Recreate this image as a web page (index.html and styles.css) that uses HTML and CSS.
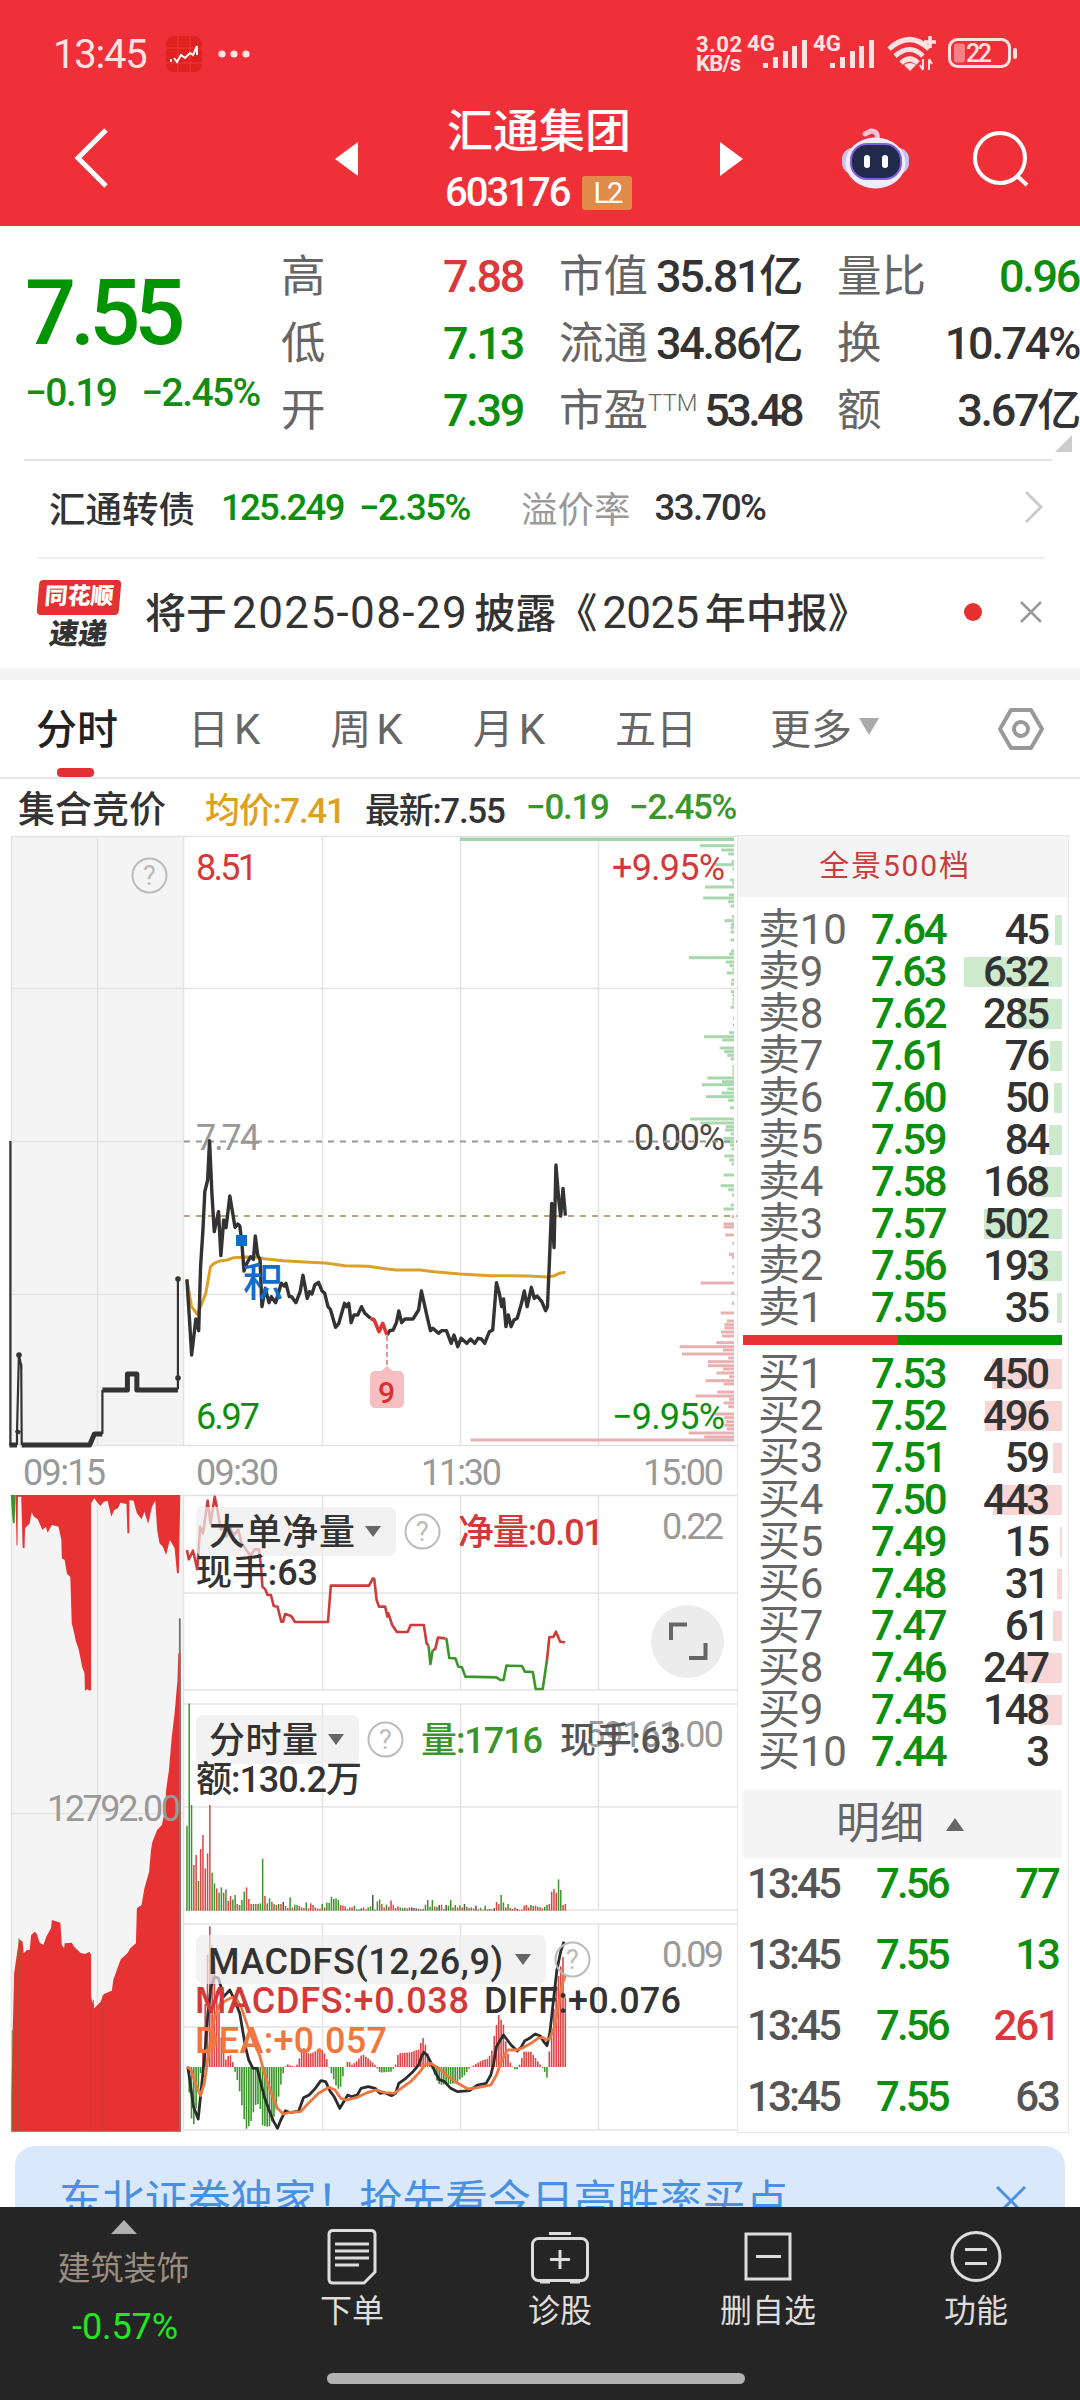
FILE: index.html
```html
<!DOCTYPE html>
<html lang="zh-CN">
<head>
    <meta charset="UTF-8">
    <meta name="viewport" content="width=device-width, initial-scale=1.0">
    <title>汇通集团 603176</title>
    <link rel="stylesheet" href="styles.css">
</head>
<body>
    <header class="top">
        <div class="status">
            <span class="clock">13:45</span>
            <svg class="app" width="36" height="36" viewBox="0 0 36 36">
                <rect width="36" height="36" rx="8" fill="#e0211f"/>
                <path d="M12 0V36M24 0V36M0 12H36M0 27H36" stroke="#ee3a35" stroke-width="1"/>
                <path d="M5 23v3M8 22l3 4 4-7 4 3 5-5 3 2 4-9v9" fill="none" stroke="#fff" stroke-width="2"/>
            </svg>
            <svg class="dots" width="32" height="10" viewBox="0 0 32 10" fill="#ffe3e3"><circle cx="4" cy="5" r="3.6"/><circle cx="16" cy="5" r="3.6"/><circle cx="28" cy="5" r="3.6"/></svg>
            <div class="speed"><span>3.02</span><span>KB/s</span></div>
            <svg class="signals" width="325" height="60" viewBox="745 25 325 60" fill="#ffe3e3">
                <g class="net-type">
                    <text x="748" y="52" textLength="28" lengthAdjust="spacingAndGlyphs">4G</text>
                    <text x="814" y="52" textLength="28" lengthAdjust="spacingAndGlyphs">4G</text>
                </g>
                <path d="M764 64h5v5h-5zM774 58h5v11h-5zM784 52h5v17h-5zM793 47h5v22h-5zM803 41h5v28h-5z"/>
                <path d="M831 64h5v5h-5zM841 58h5v11h-5zM851 52h5v17h-5zM860 47h5v22h-5zM870 41h5v28h-5z"/>
                <g fill="none" stroke="#ffe3e3" stroke-width="5">
                    <path d="M890 50q21-19 40 0M896 57q15-13 28 0M902 64q9-8 17 0"/>
                </g>
                <path d="M905 66l6 6 6-6q-6-4-12 0z"/>
                <path d="M931 37v12M925 43h12" stroke="#ffe3e3" stroke-width="3.5"/>
                <path d="M924 60v10m-3-4l3 5M930 71v-10m3 4l-3-5" fill="none" stroke="#ffe3e3" stroke-width="2"/>
                <rect x="950.5" y="40.500" width="60" height="27" rx="8" fill="none" stroke="#ffe3e3" stroke-width="3"/>
                <rect x="955" y="44.500" width="11" height="19" rx="3" fill="#f98085"/>
                <rect x="1014" y="49" width="4" height="11" rx="2"/>
                <text class="battery" x="967" y="63" textLength="26">22</text>
            </svg>
        </div>
        <nav class="titlebar">
            <svg class="back" width="40" height="64" viewBox="0 0 40 64" fill="none" stroke="#fff" stroke-width="5"><path d="M35 4L7 32l28 28"/></svg>
            <svg class="prev" width="24" height="36" viewBox="0 0 24 36" fill="#fff"><path d="M23 1v34L0 18z"/></svg>
            <div class="stock">
                <h1>汇通集团</h1>
                <div class="code"><span>603176</span><b>L2</b></div>
            </div>
            <svg class="next" width="24" height="36" viewBox="0 0 24 36" fill="#fff"><path d="M0 1v34l23-17z"/></svg>
            <svg class="robot" width="70" height="66" viewBox="840 125 70 66">
                <path d="M876 141q2-10-6-10l-6 3" fill="none" stroke="#f6c3d6" stroke-width="5" stroke-linecap="round"/>
                <rect x="841" y="148" width="67" height="26" rx="11" fill="#c9c2ee"/>
                <ellipse cx="874.500" cy="163" rx="30" ry="25.500" fill="#f1ecfd"/>
                <rect x="850" y="144" width="50" height="35" rx="16" fill="#222a4c" stroke="#7e62d6" stroke-width="2"/>
                <rect x="863" y="155" width="6" height="13" rx="3" fill="#fff"/>
                <rect x="881" y="155" width="6" height="13" rx="3" fill="#fff"/>
            </svg>
            <svg class="search" width="60" height="60" viewBox="970 129 60 60" fill="none" stroke="#fff" stroke-width="4"><circle cx="1000" cy="158" r="25"/><path d="M1016 175l11 10"/></svg>
        </nav>
    </header>

    <section class="quote">
        <div class="price">
            <div class="last">7.55</div>
            <div class="chg"><span>−0.19</span><span>−2.45%</span></div>
        </div>
        <div class="stats">
            <div><label>高</label><span class="red">7.88</span></div>
            <div><label>市值</label><span>35.81<i>亿</i></span></div>
            <div><label>量比</label><span class="green">0.96</span></div>
            <div><label>低</label><span class="green">7.13</span></div>
            <div><label>流通</label><span>34.86<i>亿</i></span></div>
            <div><label>换</label><span>10.74%</span></div>
            <div><label>开</label><span class="green">7.39</span></div>
            <div><label>市盈<sup>TTM</sup></label><span class="pe">53.48</span></div>
            <div><label>额</label><span>3.67<i>亿</i></span></div>
        </div>
        <span class="corner"></span>
    </section>

    <section class="bond">
        <span class="name">汇通转债</span>
        <span class="num green p">125.249</span>
        <span class="num green c">−2.35%</span>
        <span class="lab">溢价率</span>
        <span class="num r">33.70%</span>
        <svg width="20" height="34" viewBox="0 0 20 34" fill="none" stroke="#ccc" stroke-width="3"><path d="M2 2l15 15L2 32"/></svg>
    </section>

    <section class="news">
        <div class="logo"><b>同花顺</b><em>速递</em></div>
        <p>将于<span class="date">2025-08-29</span>披露《<span>2025</span>年中报》</p>
        <i class="dot"></i>
        <svg width="22" height="22" viewBox="0 0 22 22" stroke="#999" stroke-width="2.500"><path d="M1 1l20 20M21 1L1 21"/></svg>
    </section>

    <nav class="tabs">
        <span class="on">分时</span>
        <span>日<u>K</u></span>
        <span>周<u>K</u></span>
        <span>月<u>K</u></span>
        <span>五日</span>
        <span class="more">更多</span>
        <svg width="46" height="44" viewBox="0 0 46 44" fill="none" stroke="#999" stroke-width="4"><path d="M13 3h20l11 19-11 19H13L2 22z" stroke-linejoin="round"/><circle cx="23" cy="22" r="7"/></svg>
    </nav>

    <div class="legend">
        <span class="auction">集合竞价</span>
        <span class="avg">均价:7.41</span>
        <span class="new">最新:7.55</span>
        <span class="lime">−0.19</span>
        <span class="lime">−2.45%</span>
    </div>

    <main>
        <svg class="chart" width="737" height="1300" viewBox="0 835 737 1300">
            <!-- backgrounds and grid -->
            <rect x="11" y="836" width="172" height="610" fill="#f4f4f4"/>
            <rect x="11" y="1495" width="172" height="636" fill="#f4f4f4"/>
            <g class="grid">
                <path d="M11 836.500H737M11 988.500H737M11 1141.500H183M11 1294.500H737M11 1445.500H737"/>
                <path d="M11.500 836V1446M97.500 836V1446M183.500 836V1446M322.500 836V1446M460.500 836V1446M598.500 836V1446"/>
                <path d="M11.500 1495V2131M97.500 1495V2131M183.500 1495V2131M11 1813.500H183"/>
                <path d="M184 1495.500H737M184 1593H737M184 1690H737M184 1704H737M184 1807H737M184 1910H737M184 1924H737M184 2027H737M184 2130H737"/>
                <path d="M322.500 1495V1690M460.500 1495V1690M598.500 1495V1690M322.500 1704V1910M460.500 1704V1910M598.500 1704V1910M322.500 1924V2130M460.500 1924V2130M598.500 1924V2130"/>
            </g>
            <g id="depth"></g>

            <!-- price -->
            <g class="axis">
                <text x="196" y="880" textLength="62" fill="#d23a3a">8.51</text>
                <text x="612" y="880" textLength="113" fill="#d23a3a">+9.95%</text>
                <text x="196" y="1150" textLength="64" fill="#999">7.74</text>
                <text x="634" y="1150" textLength="91" fill="#484848">0.00%</text>
                <text x="196" y="1429" textLength="64" fill="#0c8f0c">6.97</text>
                <text x="612" y="1429" textLength="113" fill="#0c8f0c">−9.95%</text>
            </g>
            <path d="M184 1141.500H737" stroke="#999" stroke-width="2" stroke-dasharray="6 6"/>
            <path d="M184 1216H737" stroke="#b3a678" stroke-width="2" stroke-dasharray="6 6"/>
            <g class="line" transform="translate(0 1120) scale(.471939 .333333)">
                <path d="M22 63V975M36 975V940L40 705L45 738L46 975M217 942V810M377 808V477" stroke="#333" stroke-width="2.200"/>
                <path d="M20 975H36M36 940L40 930M43 738H47M46 975H190L200 942H217M217 810H270V762H290V810H377" stroke="#333" stroke-width="5"/>
                <path stroke="#dba02a" stroke-width="3" d="M396 478L406 560 418 583 425 560 436 520 441 480 446 440 454 430 465 423 482 420 495 413 520 411 545 412 560 416 600 422 655 427 690 429 730 437 780 439 820 447 840 450 890 450 920 455 975 462 1040 467 1120 468 1160 471 1175 467 1185 460 1198 457"/>
                <path stroke="#333" stroke-width="3.400" d="M396 478L402 610 406 705 415 597 421 632 425 440 430 330 434 215 440 180 444 62 449 220 454 335 463 275 468 407 474 300 479 323 487 228 498 322 504 312 508 318 512 360 517 453 523 430 531 410 537 418 541 348 546 405 551 420 555 560 562 505 570 548 575 530 584 548 596 490 602 498 606 490 613 530 618 530 627 548 636 515 642 466 651 535 656 515 661 522 667 495 675 487 682 512 688 520 695 560 700 568 711 622 718 610 730 550 734 560 739 550 744 608 750 585 758 585 766 560 773 580 785 595M820 645L826 632 833 630 840 608 845 573 851 608 858 597 875 597 887 570 893 513 898 545 905 590 912 632 917 625 929 640 936 632 946 632 956 670 962 645 970 680 977 655 989 670 997 657 1006 670 1013 655 1020 657 1027 670 1037 635 1044 630 1048 560 1052 488 1058 520 1063 560 1067 537 1072 620 1077 585 1083 620 1089 600 1096 595 1105 550 1111 513 1117 560 1126 502 1132 535 1138 528 1148 545 1156 572 1160 560 1164 430 1169 250 1174 383 1178 135 1184 240 1188 288 1193 205 1198 287"/>
                <path stroke="#e03535" stroke-width="3.600" d="M785 595L793 600 803 635 811 610 820 645"/>
            </g>
            <g fill="#333"><circle cx="19" cy="1355" r="2.800"/><circle cx="178" cy="1279" r="2.800"/><circle cx="178" cy="1378" r="2.800"/></g>
            <rect x="236" y="1235" width="11" height="11" fill="#0f6ecb"/>
            <text x="243" y="1296" class="ji">积</text>
            <path d="M387 1336V1368" stroke="#dc7373" stroke-width="1.500" stroke-dasharray="5 3"/>
            <path d="M387 1366l7 6h-14z" fill="#f6c0c2"/>
            <rect x="370" y="1371" width="34" height="37" rx="5" fill="#f6c0c2"/>
            <text x="378" y="1403" class="nine">9</text>
            <g class="axis" fill="#999">
                <text x="23" y="1485" textLength="83">09:15</text>
                <text x="196" y="1485" textLength="83">09:30</text>
                <text x="421" y="1485" textLength="81">11:30</text>
                <text x="643" y="1485" textLength="81">15:00</text>
            </g>

            <!-- call auction, lower half -->
            <g transform="translate(0 1480) scale(.471939 .333333)">
                <path fill="#3a962a" d="M23 45H33L31 130 27 128 24 75z"/>
                <path fill="#e63232" d="M33 45L35 195 37 198 38 50H45L48 203 52 205 53 145 63 130 67 97 72 110 80 118 90 150 97 140 101 158 110 135 124 140 130 180 131 235 137 240 142 282 149 290 152 430 157 458 160 480 167 510 174 560 179 580 180 632 185 628 190 632 193 630V70L200 55 205 65 213 78 220 65 228 62 236 110 242 90 250 85 255 68 268 72 270 160H274L274 60 283 62 290 100 300 118 306 95 314 132 322 80 329 62 333 150 338 190 345 200 352 225 360 180 370 205 375 280H379L382 45z"/>
            </g>
            <g transform="translate(0 1800) scale(.471939 .333333)">
                <path fill="#e63232" d="M24 995V890L27 690 30 520 37 450 41 418 48 425 50 460 57 450 63 450 66 405 74 395 78 402 84 428 92 435 98 410 108 385 110 360 128 368 131 435 136 445 137 430 152 428 157 440 170 458 180 462 190 455 193 465V590L200 625 213 605 220 582 237 572 240 540 250 500 256 478 270 460 276 445 288 430 290 325 300 315 306 265 316 215 320 150 323 125 333 90 343 75 350 30 352 -30 358 -90 364 -190 370 -260 376 -360 378 -440H383V995z"/>
                <path class="thin" d="M26 995V690M40 995V415M198 995V600" stroke="#6f7a1c"/>
                <path class="thin" d="M218 995V585" stroke="#b94a28"/>
                <path d="M381 995V-545" stroke="#777" stroke-width="4"/>
            </g>
            <text class="axis" x="47" y="1821" textLength="134" fill="#999">12792.00</text>

            <!-- net big orders -->
            <g class="line" transform="translate(0 1480) scale(.471939 .333333)" stroke-width="2.600">
                <path stroke="#cf3b3b" d="M396 210L400 238 409 212 418 268 424 140 430 160 440 62 446 130 455 50 462 100 468 150 475 140 480 170 486 140 495 165 505 150 512 190 520 205 530 228 540 208 549 208 553 260 556 320 562 328 567 345 574 345 580 378 588 380 596 425 600 425 604 402 617 408 625 426 695 426 701 317 782 317 790 295 793 297 798 360 803 380 816 380 821 410 823 400 831 435 841 456 864 456 870 435 898 435 904 490 908 497M917 510L922 508 928 473 944 475M1159 540L1164 472 1173 470 1178 455 1187 485 1197 487"/>
                <path stroke="#3a962a" d="M908 497L912 552 917 510M944 475L946 477 952 534 965 535 971 560 979 562 986 590 1052 592 1060 600 1067 600 1073 557 1106 558 1112 575 1129 576 1135 627 1150 627 1159 540"/>
            </g>

            <g id="volume"></g>
            <g id="macd"></g>
            <g class="line" transform="translate(0 1800) scale(.471939 .333333)" stroke-width="2.800">
                <path stroke="#2c2c2c" d="M398 801L404 860 410 920 420 957 427 860 434 760 440 650 447 560 455 530 463 535 468 560 474 590 487 570 497 600 508 640 514 690 520 740 527 780 536 805 545 805 553 850 560 890 570 930 580 965 588 985 595 960 605 932 615 938 633 933 643 893 655 885 668 865 680 842 690 845 700 875 708 890 720 925 737 885 745 890 757 885 765 865 780 860 795 865 805 880 815 878 830 887 838 880 845 850 860 835 875 815 887 795 893 770 898 757 905 765 912 785 920 810 930 838 942 845 955 865 970 875 995 872 1012 855 1030 850 1040 825 1046 790 1052 740 1060 720 1067 705 1075 720 1083 735 1096 753 1105 740 1112 722 1122 715 1134 702 1145 708 1152 725 1159 737 1165 700 1172 610 1180 510 1188 455 1195 425"/>
                <path stroke="#ee7740" d="M396 800L405 810 414 850 425 887 433 850 440 780 448 700 455 650 465 615 478 602 492 592 502 600 512 625 525 680 540 735 550 765 560 820 575 880 588 925 600 942 615 937 637 935 650 915 675 880 697 862 710 870 722 895 735 900 757 892 780 877 797 870 815 878 835 880 850 865 870 845 890 815 900 795 913 790 930 805 950 830 970 850 992 867 1015 862 1040 855 1052 825 1062 785 1075 750 1095 750 1110 742 1125 730 1140 715 1150 712 1158 720 1165 715 1175 680 1183 620 1190 560 1198 525"/>
            </g>

            <!-- indicator labels -->
            <g fill="#ececec" fill-opacity=".7">
                <rect x="196" y="1507" width="200" height="49" rx="7"/>
                <rect x="196" y="1715" width="163" height="49" rx="7"/>
                <rect x="196" y="1935" width="350" height="49" rx="7"/>
            </g>
            <path fill="#666" d="M365 1526h16l-8 11zM328 1734h16l-8 11zM515 1954h16l-8 11z"/>
            <g class="ask">
                <circle cx="149.500" cy="875.500" r="17"/><text x="149.500" y="885">?</text>
                <circle cx="422.500" cy="1531.500" r="17"/><text x="422.500" y="1541">?</text>
                <circle cx="385.500" cy="1739.500" r="17"/><text x="385.500" y="1749">?</text>
                <circle cx="572.500" cy="1959.500" r="17"/><text x="572.500" y="1969">?</text>
            </g>
            <g class="axis" fill="#999">
                <text x="662" y="1539" textLength="62">0.22</text>
                <text x="585" y="1747" textLength="139">59161.00</text>
                <text x="662" y="1967" textLength="62">0.09</text>
            </g>
            <g class="ind">
                <text x="209" y="1545" textLength="146">大单净量</text>
                <text x="458" y="1545" textLength="146" fill="#d23a3a">净量:0.01</text>
                <text x="196" y="1585" textLength="122">现手:63</text>
                <text x="209" y="1753" textLength="109">分时量</text>
                <text x="421" y="1753" textLength="122" fill="#3a962a">量:1716</text>
                <text x="560" y="1753" textLength="121" fill="#555">现手:63</text>
                <text x="196" y="1792" textLength="166">额:130.2万</text>
                <text x="208" y="1974" textLength="295">MACDFS(12,26,9)</text>
                <text x="195" y="2013" textLength="274" fill="#d23a3a">MACDFS:+0.038</text>
                <text x="484" y="2013" textLength="197">DIFF:+0.076</text>
                <text x="195" y="2053" textLength="192" fill="#f07840">DEA:+0.057</text>
            </g>
            <circle cx="687.500" cy="1641.500" r="36.500" fill="#ececec"/>
            <path d="M671 1640V1624.500H687M689 1658H705.500V1643" fill="none" stroke="#666" stroke-width="4"/>
        </svg>

        <aside class="book">
            <div class="full">全景500档</div>
            <div class="levels" id="asks"></div>
            <div class="ratio"><i></i></div>
            <div class="levels buy" id="bids"></div>
            <div class="detail">明细<i></i></div>
            <div class="trade"><span>13:45</span><b>7.56</b><em class="green">77</em></div>
            <div class="trade"><span>13:45</span><b>7.55</b><em class="green">13</em></div>
            <div class="trade"><span>13:45</span><b>7.56</b><em class="red">261</em></div>
            <div class="trade"><span>13:45</span><b>7.55</b><em>63</em></div>
        </aside>
    </main>

    <div class="banner">
        <span>东北证券独家！抢先看今日高胜率买点</span>
        <svg width="30" height="30" viewBox="0 0 30 30" stroke="#4a90e2" stroke-width="3"><path d="M1 1l28 28M29 1L1 29"/></svg>
    </div>

    <footer>
        <div class="items">
            <div class="sector"><i></i><span>建筑装饰</span><b>-0.57%</b></div>
            <div class="item doc">
                <svg width="60" height="56" viewBox="0 0 60 56"><path d="M11 1.500h38q4 0 4 4V43L42 54H11q-4 0-4-4V5.500q0-4 4-4z"/><path d="M13 15h34M13 22h34M13 29h34M13 36h24"/></svg>
                <span>下单</span>
            </div>
            <div class="item">
                <svg width="60" height="56" viewBox="0 0 60 56"><rect x="2.500" y="9.500" width="55" height="42" rx="6"/><path d="M19 4.500h22M30 21v19M20 30.500h20M10 53h10M40 53h10"/></svg>
                <span>诊股</span>
            </div>
            <div class="item">
                <svg width="60" height="56" viewBox="0 0 60 56"><rect x="8" y="5" width="44" height="45"/><path d="M18 27.500h25"/></svg>
                <span>删自选</span>
            </div>
            <div class="item">
                <svg width="60" height="56" viewBox="0 0 60 56"><circle cx="30" cy="27.500" r="24"/><path d="M19 20.500h22M19 34.500h22"/></svg>
                <span>功能</span>
            </div>
        </div>
        <div class="home"></div>
    </footer>
    <script src="chart.js"></script>
</body>
</html>
```
FILE: styles.css
```css
* {
    box-sizing: border-box;
}
body {
    margin: 0;
    width: 1080px;
    height: 2400px;
    overflow: hidden;
    position: relative;
    background: #fff;
    color: #333;
    font-family: Roboto, "Noto Sans CJK SC", sans-serif;
    font-weight: 500;
}
i, em {
    font-style: normal;
}
svg {
    display: block;
    flex: none;
}
.red {
    color: #d9393b;
}
.green {
    color: #0c8f0c;
}

/* header */
.top {
    height: 226px;
    background: #f03038;
    color: #fff;
}
.status {
    height: 108px;
    padding-left: 53px;
    display: flex;
    align-items: center;
    color: #ffe3e3;
}
.clock {
    width: 113px;
    font-size: 40px;
    font-weight: 400;
    letter-spacing: -1.2px;
}
.dots {
    margin-left: 16px;
}
.speed {
    margin-left: 446px;
    width: 48px;
    font-size: 22px;
    line-height: 19.5px;
    font-weight: 700;
}
.speed span {
    display: block;
    letter-spacing: 0.6px;
}
.speed span + span {
    letter-spacing: -0.8px;
}
.net-type {
    font-size: 22px;
    font-weight: 700;
}
.battery {
    font-size: 25px;
}
.titlebar {
    height: 118px;
    display: flex;
    align-items: center;
}
.back {
    margin: -18px 0 0 71px;
}
.prev {
    margin: -16px 0 0 224px;
}
.stock {
    width: 186px;
    margin: -16px 87px 0 88px;
    white-space: nowrap;
}
h1 {
    margin: 0;
    font-size: 46px;
    line-height: 58px;
    font-weight: 500;
}
.code {
    margin: 10px 0 0 -2px;
    display: flex;
    align-items: center;
    gap: 13px;
    font-size: 40px;
    line-height: 46px;
    letter-spacing: -2px;
}
.code b {
    width: 50px;
    height: 34px;
    border-radius: 3px;
    background: #e08b4a;
    font-size: 29px;
    line-height: 35px;
    font-weight: 400;
    text-align: center;
}
.next {
    margin-top: -16px;
}
.robot {
    margin: -18px 59px 0 97px;
}
.search {
    margin-top: -16px;
}

/* quote */
.quote {
    height: 235px;
    display: flex;
    position: relative;
}
.quote:after {
    content: "";
    position: absolute;
    left: 24px;
    right: 28px;
    bottom: 0;
    height: 2px;
    background: #e2e2e2;
}
.price {
    width: 281px;
    padding: 38px 0 0 25px;
    color: #009400;
}
.last {
    font-size: 90px;
    line-height: 100px;
    letter-spacing: -6px;
}
.chg {
    margin-top: 5px;
    display: flex;
    gap: 25px;
    font-size: 39px;
    line-height: 48px;
    letter-spacing: -1.6px;
    white-space: nowrap;
    color: #128c12;
}
.stats {
    display: grid;
    grid-template-columns: repeat(3, 242px);
    column-gap: 36px;
    grid-auto-rows: 67px;
    padding-top: 17px;
}
.stats div {
    display: flex;
    justify-content: space-between;
    align-items: center;
    white-space: nowrap;
    font-size: 45px;
    letter-spacing: -2.3px;
}
.stats label {
    margin-top: -8px;
    font-size: 44.5px;
    font-weight: 400;
    letter-spacing: 0;
    color: #666;
}
.stats span {
    line-height: 60px;
}
.stats .pe {
    letter-spacing: -3.6px;
}
.stats i {
    font-size: 44px;
    line-height: 40px;
}
.stats sup {
    font-size: 24px;
    font-weight: 300;
    vertical-align: 15px;
    line-height: 0;
}
.corner {
    position: absolute;
    right: 8px;
    bottom: 9px;
    border-left: 17px solid transparent;
    border-bottom: 17px solid #ccc;
}

.bond {
    height: 98px;
    margin: 0 36px 0 37px;
    padding: 0 0 4px 12px;
    display: flex;
    align-items: center;
    border-bottom: 2px solid #eee;
    font-size: 36.5px;
}
.bond .num {
    font-size: 36.5px;
    letter-spacing: -1.5px;
}
.bond .p {
    margin-left: 26px;
    width: 138px;
    letter-spacing: -1.7px;
}
.bond .c {
    width: 162px;
}
.lab {
    font-weight: 400;
    color: #999;
}
.r {
    margin-left: 24px;
}
.bond svg {
    margin-left: auto;
}

/* news */
.news {
    padding: 0 38px 12px;
    display: flex;
    align-items: center;
    border-bottom: 12px solid #f4f4f4;
    box-sizing: content-box;
    height: 97px;
}
.logo {
    width: 82px;
    margin-top: 11px;
    text-align: center;
}
.logo b {
    display: block;
    height: 35px;
    border-radius: 4px;
    background: #e33033;
    transform: skewX(-5deg);
    color: #fff;
    font-size: 23px;
    line-height: 33px;
    font-weight: 900;
}
.logo em {
    display: block;
    height: 32px;
    font-size: 29px;
    line-height: 38px;
    font-weight: 900;
    transform: skewX(-8deg);
}
.news p {
    margin: 4px 0 0 25px;
    font-size: 41px;
    white-space: nowrap;
    width: 801px;
}
.news p span {
    font-size: 44px;
    margin: 0 6px 0 5px;
    font-weight: 400;
    letter-spacing: -0.6px;
}
.news p .date {
    letter-spacing: 1.4px;
}
.dot {
    width: 18px;
    height: 18px;
    margin: 8px 38px 0 18px;
    border-radius: 50%;
    background: #e63030;
}
.news svg {
    margin-top: 8px;
}

/* tabs */
.tabs {
    height: 99px;
    padding: 0 36px 0 36px;
    display: flex;
    align-items: center;
    border-bottom: 2px solid #e5e5e5;
    font-size: 41px;
    font-weight: 400;
    color: #666;
}
.tabs span {
    margin: -5px 70px 0 0;
    white-space: nowrap;
}
.tabs u {
    text-decoration: none;
    margin-left: 5px;
    font-size: 42px;
}
.tabs .on {
    position: relative;
    color: #222;
    font-weight: 500;
}
.on:after {
    content: "";
    position: absolute;
    left: 21px;
    bottom: -21px;
    width: 37px;
    height: 9px;
    border-radius: 4px;
    background: #e33033;
}
.tabs .more {
    margin-right: 0;
    margin-left: 3px;
    display: flex;
    align-items: center;
}
.more:after {
    content: "";
    margin-left: 7px;
    border: 10px solid transparent;
    border-top: 17px solid #aaa;
    border-bottom: 0;
}
.tabs svg {
    margin-left: auto;
}

.legend {
    height: 56px;
    padding-left: 18px;
    display: flex;
    align-items: center;
    white-space: nowrap;
    font-size: 35px;
    letter-spacing: -1.3px;
}
.auction {
    width: 187px;
    font-size: 37px;
    letter-spacing: 0;
}
.avg {
    width: 160px;
    color: #dfa020;
}
.new {
    width: 161px;
}
.lime {
    width: 103px;
    color: #3a962a;
}

/* charts */
main {
    display: flex;
    height: 1298px;
}
.grid path {
    stroke: #e3e3e3;
    stroke-width: 1.5;
}
.line path {
    fill: none;
    stroke-linejoin: round;
    vector-effect: non-scaling-stroke;
}
.thin {
    stroke-width: 2;
}
.axis {
    font-size: 36px;
    font-weight: 400;
}
.ind {
    font-size: 36px;
    fill: #333;
}
.ji {
    font-size: 40px;
    fill: #0f6ecb;
}
.nine {
    font-size: 30px;
    fill: #dc3030;
}
.ask circle {
    fill: none;
    stroke: #bbb;
    stroke-width: 2;
}
.ask text {
    font-size: 27px;
    font-weight: 400;
    text-anchor: middle;
    fill: #bbb;
}

/* order book */
.book {
    width: 332px;
    border: 1px solid #e8e8e8;
    color: #333;
}
.full {
    height: 61px;
    background: #f4f4f4;
    color: #c83c3c;
    font-size: 30px;
    line-height: 59px;
    font-weight: 400;
    text-align: center;
    letter-spacing: 1.8px;
    padding-right: 16px;
}
.levels {
    padding: 12px 5px 0;
    height: 438px;
}
.buy {
    padding-top: 8px;
    height: 445px;
}
.level {
    position: relative;
    height: 42px;
    padding: 0 15px 0 15px;
    display: flex;
    align-items: center;
    font-size: 42px;
    line-height: 42px;
    letter-spacing: -2.2px;
}
.level span {
    width: 113px;
    font-size: 42px;
    font-weight: 400;
    letter-spacing: -0.2px;
    color: #666;
    white-space: nowrap;
}
.level b {
    font-weight: 500;
    color: #0c8f0c;
}
.level em {
    margin-left: auto;
    z-index: 1;
}
.level i {
    position: absolute;
    right: 1px;
    top: 6px;
    height: 30px;
    background: #cdeacd;
}
.buy .level i {
    background: #f9d6d6;
}
.ratio {
    height: 10px;
    margin: 0 6px 0 5px;
    background: #009900;
}
.ratio i {
    display: block;
    width: 48.5%;
    height: 10px;
    background: #e63232;
}
.detail {
    height: 68px;
    margin: 0 6px 0 5px;
    padding-left: 93px;
    display: flex;
    align-items: center;
    background: #f4f4f4;
    font-size: 44px;
    line-height: 60px;
    font-weight: 400;
    color: #666;
}
.detail i {
    margin: 0 0 0 22px;
    border: 9px solid transparent;
    border-bottom: 13px solid #666;
    border-top: 0;
}
.trade {
    height: 71px;
    padding: 0 9px 21px 9px;
    display: flex;
    align-items: center;
    font-size: 42px;
    letter-spacing: -2.9px;
    color: #555;
}
.trade span {
    width: 129px;
}
.trade b {
    font-weight: 500;
    color: #0c8f0c;
}
.trade em {
    margin-left: auto;
    letter-spacing: -2px;
}

/* banner and bottom bar */
.banner {
    height: 120px;
    margin: 13px 15px 0 15px;
    padding: 27px 39px 0 44px;
    display: flex;
    justify-content: space-between;
    border-radius: 20px;
    background: #d9e8fb;
    color: #4a90e2;
    font-size: 43px;
    line-height: 56px;
    font-weight: 400;
    letter-spacing: -0.1px;
}
.banner svg {
    margin-top: 13px;
}
footer {
    position: absolute;
    left: 0;
    bottom: 0;
    width: 1080px;
    height: 193px;
    background: #252525;
    color: #ddd;
}
.items {
    height: 166px;
    display: flex;
}
.sector {
    width: 247px;
    padding-top: 13px;
    display: flex;
    flex-direction: column;
    align-items: center;
    color: #9a8d80;
    font-size: 33px;
    line-height: 40px;
    font-weight: 400;
}
.sector i {
    border: 13px solid transparent;
    border-bottom: 14px solid #b0b0b0;
    border-top: 0;
}
.sector span {
    margin-top: 15px;
}
.sector b {
    margin-top: 18px;
    margin-left: 3px;
    font-size: 36px;
    font-weight: 400;
    letter-spacing: -0.1px;
    color: #22e622;
}
.item {
    width: 208px;
    padding-top: 22px;
    display: flex;
    flex-direction: column;
    align-items: center;
    font-size: 32px;
    line-height: 40px;
    font-weight: 400;
}
.item svg {
    margin-left: 2px;
    fill: none;
    stroke: #ddd;
    stroke-width: 3;
}
.item span {
    margin: 6px 0 0 2px;
}
.home {
    width: 418px;
    height: 11px;
    margin-left: 327px;
    border-radius: 6px;
    background: #b2b2b2;
}
```
FILE: chart.js
```js
var GREEN = '#3a962a', RED = '#dc4545', DARK = '#555';
var kx = 0.471939, ky = 1 / 3;

function rect(x, y, w, h, color) {
    return '<rect x="' + x.toFixed(1) + '" y="' + y.toFixed(1) + '" width="' + w.toFixed(1) + '" height="' + h.toFixed(1) + '" fill="' + color + '"/>';
}

// order depth by price, [start, y]
var sells = [[1483,77],[1528,90],[1543,102],[1550,125],[1515,134],[1552,147],[1547,180],[1552,190],[1494,201],[1545,225],[1490,234],[1543,245],[1548,258],[1551,290],[1535,302],[1549,313],[1548,323],[1548,336],[1548,360],[1549,393],[1545,402],[1460,413],[1538,426],[1546,437],[1552,448],[1540,459],[1550,480],[1549,492],[1549,515],[1552,526],[1552,538],[1552,550],[1548,562],[1553,595],[1553,615],[1545,638],[1492,650],[1530,660],[1525,684],[1534,695],[1541,706],[1548,717],[1552,740],[1552,751],[1552,762],[1499,774],[1530,785],[1487,794],[1541,807],[1529,819],[1496,830],[1543,841],[1547,863],[1462,897],[1484,909],[1538,920],[1536,930],[1548,942],[1533,955],[1536,965],[1547,975],[1550,987],[1535,1008],[1545,1020],[1550,1032],[1533,1065],[1527,1097],[1543,1109],[1551,1125],[1548,1155],[1533,1167]];
var buys = [[1550,290],[1533,312],[1533,321],[1537,345],[1552,370],[1545,403],[1551,412],[1552,440],[1552,460],[1485,489],[1550,520],[1551,550],[1527,579],[1540,603],[1535,614],[1535,624],[1528,636],[1530,648],[1518,668],[1440,680],[1532,690],[1445,702],[1543,714],[1500,725],[1500,737],[1532,747],[1518,759],[1545,770],[1495,782],[1533,792],[1520,816],[1474,828],[1545,838],[1533,849],[1543,860],[1515,882],[1535,893],[1538,905],[1535,916],[1540,927],[1459,939],[1492,951],[997,960]];
var html = rect(460, 837.5, 274, 3.5, '#a3d3a8');
sells.forEach(function (b) {
    html += rect(b[0] * kx, 818.5 + b[1] * ky, 734 - b[0] * kx, 3, '#a9d8ae');
});
buys.forEach(function (b) {
    html += rect(b[0] * kx, 1118.5 + b[1] * ky, 734 - b[0] * kx, 3, '#e9b0b2');
});
document.getElementById('depth').innerHTML = html;

// minute volume, letter is the colour
var vols = 'g255 g622 g317 r137 r167 g89 r185 r227 r127 r172 r317 g114 g82 r67 g54 g70 r54 g64 r29 r44 g34 g47 r20 g17 g32 g57 r70 r35 r20 g20 r20 g20 g22 g155 r44 g22 g37 r27 g20 r17 g20 r20 k26 r14 r8 g40 r10 g18 g17 r14 r10 r8 g25 r7 r22 r17 r10 r7 r6 g20 r10 g24 g24 g42 g35 g37 g32 r17 r15 r13 g5 r10 r10 g15 k4 k4 k7 r10 r4 g10 g13 k47 k3 g28 g34 r20 r10 g18 r12 r31 r18 r8 r13 g10 k7 g9 r7 r10 k10 k8 k7 r6 k4 g6 g18 g32 g12 g32 r13 g12 k17 r18 r5 k17 g15 g32 r10 g17 r10 g16 r10 k20 g12 r8 g10 r7 k15 r4 g9 r3 g15 r4 k5 r4 k8 r26 r20 g47 g25 r10 g20 r8 r5 r10 k5 r3 r4 r15 r17 r10 g17 r14 r15 g12 r10 r7 g11 g17 r20 r57 r65 r54 g94 g62 r17 r20'.split(' ');
html = '';
vols.forEach(function (v, i) {
    var h = v.slice(1) * ky;
    var c = { g: GREEN, r: RED, k: DARK }[v[0]];
    html += rect((396 + i * 4.86) * kx - 0.7, 1910.7 - h, 1.5, h, c);
});
document.getElementById('volume').innerHTML = html;

// MACD histogram, key points joined by straight lines
var keys = [[396,801],[401,880],[406,960],[410,978],[415,930],[425,820],[428,801],[434,640],[439,480],[444,372],[449,430],[454,500],[459,570],[465,650],[470,730],[478,780],[487,760],[493,785],[497,810],[505,850],[512,910],[521,988],[530,975],[541,915],[550,910],[556,975],[570,982],[584,940],[593,870],[600,820],[607,790],[612,795],[620,798],[627,801],[632,785],[642,740],[650,760],[660,760],[680,745],[690,765],[697,801],[705,830],[715,868],[722,860],[730,805],[738,780],[745,795],[755,785],[768,762],[780,775],[795,795],[805,818],[830,815],[838,795],[844,760],[870,757],[887,748],[896,712],[903,740],[910,785],[917,810],[925,840],[932,855],[965,850],[985,825],[995,803],[1005,795],[1020,782],[1035,775],[1043,750],[1048,700],[1057,645],[1067,675],[1073,740],[1080,785],[1090,808],[1097,808],[1103,785],[1110,755],[1125,755],[1140,785],[1148,800],[1154,815],[1159,833],[1163,765],[1170,680],[1178,560],[1183,530],[1193,470],[1199,620]];
html = '';
var k = 0;
for (var i = 0; i < 166; i++) {
    var x = 396 + i * 4.86;
    while (k < keys.length - 2 && keys[k + 1][0] < x) k++;
    var a = keys[k], b = keys[k + 1];
    var d = (a[1] + (b[1] - a[1]) * (x - a[0]) / (b[0] - a[0]) - 801) * ky;
    html += rect(x * kx - 0.8, 2067 + Math.min(d, 0), 1.6, Math.abs(d), d < 0 ? RED : GREEN);
}
document.getElementById('macd').innerHTML = html;

// ten levels on each side
function levels(id, rows) {
    document.getElementById(id).innerHTML = rows.map(function (r) {
        return '<div class="level"><i style="width:' + Math.round(r[2] * 0.155) + 'px"></i><span>' + r[0] + '</span><b>' + r[1] + '</b><em>' + r[2] + '</em></div>';
    }).join('');
}
levels('asks', [['卖10', '7.64', 45], ['卖9', '7.63', 632], ['卖8', '7.62', 285], ['卖7', '7.61', 76], ['卖6', '7.60', 50], ['卖5', '7.59', 84], ['卖4', '7.58', 168], ['卖3', '7.57', 502], ['卖2', '7.56', 193], ['卖1', '7.55', 35]]);
levels('bids', [['买1', '7.53', 450], ['买2', '7.52', 496], ['买3', '7.51', 59], ['买4', '7.50', 443], ['买5', '7.49', 15], ['买6', '7.48', 31], ['买7', '7.47', 61], ['买8', '7.46', 247], ['买9', '7.45', 148], ['买10', '7.44', 3]]);
```
